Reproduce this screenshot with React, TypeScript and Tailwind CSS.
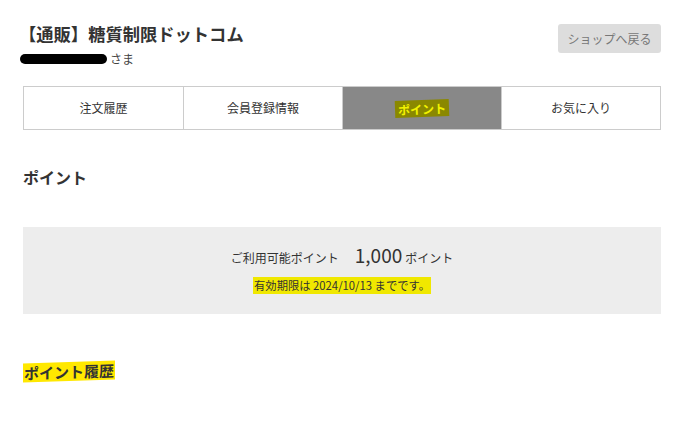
const tabs = ["注文履歴", "会員登録情報", "ポイント", "お気に入り"];

const App = () => (
  <div
    className="w-[676px] h-[432px] bg-white text-[#333] overflow-hidden"
    style={{ fontFamily: '"Noto Sans CJK JP", "Noto Sans", sans-serif' }}
  >
    <div className="ml-[23px] w-[638px]">
      <div className="flex justify-between pt-[24px]">
        <div>
          <h1 className="text-[17.3px] font-bold leading-[20px] -ml-[4px] text-[#333]">【通販】糖質制限ドットコム</h1>
          <div className="flex items-center mt-[8px] -ml-[3px]">
            <span className="inline-block w-[87px] h-[10px] rounded-full bg-black" />
            <span className="ml-[3px] text-[12px] leading-[14px] text-[#444]">さま</span>
          </div>
        </div>
        <button className="w-[103px] h-[29px] rounded-[3px] bg-[#dddddd] text-[12px] text-[#777]">
          ショップへ戻る
        </button>
      </div>

      <div className="mt-[20px] grid grid-cols-4 h-[44px] border border-[#cccccc]">
        {tabs.map((t, i) => (
          <div
            key={t}
            className={
              i === 2
                ? "flex items-center justify-center bg-[#888888] border-l border-[#cccccc]"
                : i === 0
                ? "flex items-center justify-center"
                : "flex items-center justify-center border-l border-[#cccccc]"
            }
          >
            {i === 2 ? (
              <span className="px-[3px] bg-[#8a8800] text-[#f2f200] text-[12px] font-bold leading-[17px] -rotate-2">
                {t}
              </span>
            ) : (
              <span className="text-[12px] text-[#333]">{t}</span>
            )}
          </div>
        ))}
      </div>

      <h2 className="mt-[37px] text-[16px] font-bold leading-[20px]">ポイント</h2>

      <div className="mt-[40px] h-[87px] pb-[4px] bg-[#ededed] flex flex-col items-center justify-center">
        <div className="flex items-baseline text-[#333]">
          <span className="text-[12px]">ご利用可能ポイント</span>
          <span className="ml-[16px] text-[19px] leading-[24px]">1,000</span>
          <span className="ml-[3px] text-[12px]">ポイント</span>
        </div>
        <div className="mt-[10px] px-[1px] bg-[#f0e800] text-[11.3px] leading-[17px] text-[#333]">
          有効期限は 2024/10/13 までです。
        </div>
      </div>

      <h2 className="mt-[48px] inline-block text-[15px] font-bold leading-[19px] bg-[#ffe800] -skew-y-2 px-[1px]">
        ポイント履歴
      </h2>
    </div>
  </div>
);

export default App;
